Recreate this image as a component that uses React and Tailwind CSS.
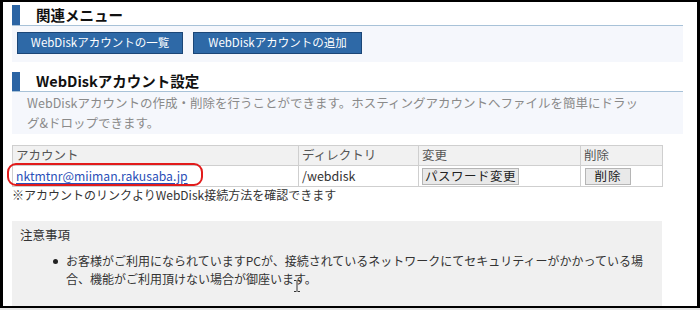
import React from "react";

const font = { fontFamily: '"Noto Sans CJK JP", "Noto Sans", sans-serif' };

function Heading({ children, h }) {
  return (
    <div className={`flex items-stretch ${h} border-b border-[#a8c2d8]`}>
      <div className="w-2 bg-[#2b64a4]" />
      <div className="ml-4 flex items-center text-[14.5px] font-bold text-[#111] leading-none">{children}</div>
    </div>
  );
}

const line1 = "WebDiskアカウントの作成・削除を行うことができます。ホスティングアカウントへファイルを簡単にドラッ";
const line2 = "グ&ドロップできます。";

export default function App() {
  return (
    <div className="w-[700px] h-[310px] bg-[#e6e6e6] overflow-hidden" style={font}>
      <div className="h-[308px] border-l-[3px] border-r-[3px] border-t-2 border-b-2 border-black bg-white overflow-hidden">
        <div className="pl-[9px] pt-[3px] text-[#333]">
          <div className="w-[671px]">
            <Heading h="h-[21px]">関連メニュー</Heading>
            <div className="bg-[#f5f7fc] h-[36px] pl-[5px] pt-[6px] flex gap-[10px]">
              <button className="h-[22px] w-[166px] bg-[#2e69a7] border border-[#1b4677] text-white text-[11.5px] leading-none">WebDiskアカウントの一覧</button>
              <button className="h-[22px] w-[169px] bg-[#2e69a7] border border-[#1b4677] text-white text-[11.5px] leading-none">WebDiskアカウントの追加</button>
            </div>
            <div className="mt-[10px]">
              <Heading h="h-[20px]">WebDiskアカウント設定</Heading>
            </div>
            <div className="bg-[#f5f7fc] h-[42px] pl-[15px] pr-[10px] pt-[1px] text-[12.5px] leading-[20px] text-[#8a8a8a] whitespace-nowrap">
              <div>{line1}</div>
              <div>{line2}</div>
            </div>
          </div>

          <div className="relative w-[650px] mt-[11px]">
            <table className="w-[650px] border-collapse text-[12.5px] text-[#333] table-fixed">
              <colgroup>
                <col className="w-[286px]" />
                <col className="w-[120px]" />
                <col className="w-[162px]" />
                <col className="w-[82px]" />
              </colgroup>
              <thead>
                <tr className="bg-[#f1f1f1] h-[20px]">
                  <th className="border border-[#cfcfcf] text-left font-normal pl-[3px] leading-none text-[#555]">アカウント</th>
                  <th className="border border-[#cfcfcf] text-left font-normal pl-[3px] leading-none text-[#555]">ディレクトリ</th>
                  <th className="border border-[#cfcfcf] text-left font-normal pl-[3px] leading-none text-[#555]">変更</th>
                  <th className="border border-[#cfcfcf] text-left font-normal pl-[3px] leading-none text-[#555]">削除</th>
                </tr>
              </thead>
              <tbody>
                <tr className="h-[21px] bg-white">
                  <td className="border border-[#cfcfcf] pl-[3px] leading-none">
                    <a className="text-[#2b4fb8] underline underline-offset-2 text-[12.2px]">nktmtnr@miiman.rakusaba.jp</a>
                  </td>
                  <td className="border border-[#cfcfcf] pl-[3px] leading-none">/webdisk</td>
                  <td className="border border-[#cfcfcf] pl-[3px] leading-none">
                    <button className="h-[17px] w-[97px] bg-[#e9e9e9] border border-[#b5b5b5] text-[12.5px] leading-none text-[#222] tracking-[0.5px]">パスワード変更</button>
                  </td>
                  <td className="border border-[#cfcfcf] pl-[4px] leading-none">
                    <button className="h-[17px] w-[46px] bg-[#e9e9e9] border border-[#b5b5b5] text-[12.5px] leading-none text-[#222] tracking-[1px]">削除</button>
                  </td>
                </tr>
              </tbody>
            </table>
            <div className="absolute left-[-5px] top-[18px] w-[196px] h-[23px] border-2 border-[#e21b1b] rounded-[9px]" />
            <div className="text-[12px] leading-[16px] text-[#333]">※アカウントのリンクよりWebDisk接続方法を確認できます</div>
          </div>

          <div className="relative w-[650px] h-[90px] mt-[18px] bg-[#f0f0f0] pt-[5px] pl-[8px] text-[12.5px] text-[#333]">
            <div className="leading-[18px]">注意事項</div>
            <div className="flex mt-[8px] pl-[33px] pr-[6px]">
              <span className="w-[5px] h-[5px] rounded-full bg-[#222] mt-[7px] mr-[8px] shrink-0" />
              <div className="text-[12px] leading-[18px]">
                お客様がご利用になられていますPCが、接続されているネットワークにてセキュリティーがかかっている場合、機能がご利用頂けない場合が御座います。
              </div>
            </div>
            <svg className="absolute left-[281px] top-[59px]" width="8" height="12" viewBox="0 0 8 12">
              <path d="M1 0.5h2.5M4.5 0.5h2.5M4 1v10M1 11.5h2.5M4.5 11.5h2.5" stroke="#333" strokeWidth="1" fill="none" />
            </svg>
          </div>
        </div>
      </div>
    </div>
  );
}
